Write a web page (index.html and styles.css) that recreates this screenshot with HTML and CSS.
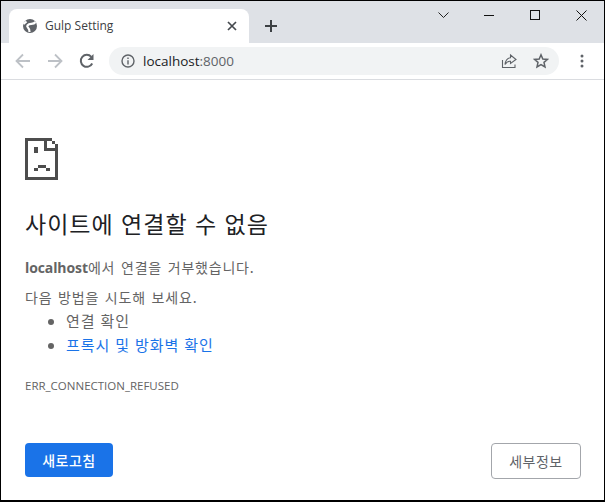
FILE: index.html
```html
<!DOCTYPE html>
<html lang="ko">
<head>
<meta charset="utf-8">
<title>Gulp Setting</title>
<link rel="stylesheet" href="styles.css">
</head>
<body>
<div class="window">
  <header class="tabstrip">
    <div class="tab">
      <svg class="favicon" width="16" height="16" viewBox="0 0 16 16"><circle cx="8" cy="8" r="7" fill="#5f6368"/><path d="M13.500 4C11 7.500 8 4.500 5.500 7.500 4 9.500 8 9.500 7.500 14M1.500 6 4.500 3.500" fill="none" stroke="#fff" stroke-width="2.200"/></svg>
      <span class="tab-title">Gulp Setting</span>
      <svg class="tab-close" width="10" height="10" viewBox="0 0 10 10"><path d="M1 1 9 9M9 1 1 9" stroke="#45494e" stroke-width="1.700"/></svg>
    </div>
    <svg class="newtab" width="14" height="14" viewBox="0 0 14 14"><path d="M7 1V13M1 7H13" stroke="#3c4043" stroke-width="2"/></svg>
    <div class="window-controls">
      <svg class="caption" width="11" height="11" viewBox="0 0 11 11"><path d="M.5 2.500 5.500 7.500 10.500 2.500" fill="none" stroke="#222" stroke-width="1"/></svg>
      <svg class="caption" width="11" height="11" viewBox="0 0 11 11"><path d="M0 5.500H10" stroke="#111" stroke-width="1"/></svg>
      <svg class="caption" width="11" height="11" viewBox="0 0 11 11"><rect x=".5" y=".5" width="9" height="9" fill="none" stroke="#111" stroke-width="1"/></svg>
      <svg class="caption" width="11" height="11" viewBox="0 0 11 11"><path d="M.5.500 10.500 10.500M10.500.500 .5 10.500" stroke="#111" stroke-width="1"/></svg>
    </div>
  </header>
  <nav class="toolbar">
    <svg class="nav" width="16" height="16" viewBox="0 0 16 16"><path d="M15 8H2M8 1.500 1.500 8 8 14.500" fill="none" stroke="#bdc1c6" stroke-width="1.800"/></svg>
    <svg class="nav" width="16" height="16" viewBox="0 0 16 16"><path d="M1 8H14M8 1.500 14.500 8 8 14.500" fill="none" stroke="#bdc1c6" stroke-width="1.800"/></svg>
    <svg class="nav" width="16" height="16" viewBox="0 0 16 16"><path d="M13.200 10.500A6 6 0 1 1 12.300 3.800" fill="none" stroke="#5f6368" stroke-width="2"/><path d="M14.500 1V7H8.500Z" fill="#5f6368"/></svg>
    <div class="omnibox">
      <svg class="info" width="14" height="14" viewBox="0 0 14 14"><circle cx="7" cy="7" r="6" fill="none" stroke="#5f6368" stroke-width="1.400"/><path d="M7 6.200V10.400M7 3.600V5" stroke="#5f6368" stroke-width="1.400"/></svg>
      <span class="url"><span class="host">localhost</span>:8000</span>
      <svg class="omni-icon" width="16" height="16" viewBox="0 0 16 16"><path d="M1.500 7V14.500H14V11.500" fill="none" stroke="#5f6368" stroke-width="1.100"/><path d="M9.500 2 15 6.500 9.500 10.500V8.300C7 8 5.500 9 4 11.500 4.500 7.500 6.500 5 9.500 4.700Z" fill="none" stroke="#5f6368" stroke-width="1.100"/></svg>
      <svg class="omni-icon" width="16" height="16" viewBox="0 0 16 16"><path d="M8 1.800 9.800 6 14.500 6.400 11 9.400 12 14 8 11.600 4 14 5 9.400 1.500 6.400 6.200 6Z" fill="none" stroke="#5f6368" stroke-width="1.500"/></svg>
    </div>
    <svg class="menu" width="4" height="14" viewBox="0 0 4 14"><circle cx="2" cy="2" r="1.500" fill="#5f6368"/><circle cx="2" cy="7" r="1.500" fill="#5f6368"/><circle cx="2" cy="12" r="1.500" fill="#5f6368"/></svg>
  </nav>
  <main class="page">
    <svg class="sad" width="33" height="42" viewBox="0 0 33 42" shape-rendering="crispEdges"><path fill="#4d4d4d" d="M0 0H27V3H3V39H30V6H33V42H0ZM19 3H22V10H30V13H19ZM27 3H30V6H27ZM9 9H13V15H9Z"/><path fill="#4d4d4d" d="M13 27H21V30H13ZM9 30H13V33H9ZM21 30H25V33H21Z"/></svg>
    <h1 class="title">사이트에 연결할 수 없음</h1>
    <p class="refused"><strong>localhost</strong>에서 연결을 거부했습니다.</p>
    <p class="try">다음 방법을 시도해 보세요.</p>
    <ul class="tips">
      <li>연결 확인</li>
      <li><a class="link" href="#">프록시 및 방화벽 확인</a></li>
    </ul>
    <div class="code">ERR_CONNECTION_REFUSED</div>
    <div class="buttons">
      <button class="btn primary">새로고침</button>
      <button class="btn secondary">세부정보</button>
    </div>
  </main>
</div>
</body>
</html>
```
FILE: styles.css
```css
* { box-sizing: border-box; }
html, body { margin: 0; height: 100%; overflow: hidden; }
body { font-family: "Noto Sans CJK KR", "Liberation Sans", sans-serif; background: #fff; }
svg { display: block; flex: none; }
.window { width: 605px; height: 502px; border: 1px solid #000; border-width: 1px 1px 2px 1px; display: flex; flex-direction: column; }
.tabstrip { height: 42px; background: #dee1e6; display: flex; align-items: flex-start; padding: 8px 0 0 8px; flex: none; }
.tab { width: 240px; height: 34px; background: #fff; border-radius: 8px 8px 0 0; display: flex; align-items: center; padding: 0 12px 0 13px; }
.tab-title { font: 12px/16px "Open Sans", "Liberation Sans", sans-serif; color: #3c4043; margin-left: 7px; flex: 1; }
.newtab { margin: 10px 0 0 15px; }
.window-controls { margin-left: auto; display: flex; align-items: center; gap: 35px; padding: 1px 17px 0 0; }
.toolbar { height: 37px; border-bottom: 1px solid #dadce0; display: flex; align-items: center; padding: 0 0 1px 14px; flex: none; }
.nav { margin-right: 16px; }
.nav:nth-child(3) { margin-right: 14px; }
.omnibox { width: 450px; height: 28px; border-radius: 14px; background: #f1f3f4; display: flex; align-items: center; padding: 0 10px 0 12px; }
.info { margin-right: 8px; }
.url { font: 13.500px/20px "Open Sans", "Liberation Sans", sans-serif; color: #5f6368; flex: 1; }
.host { color: #202124; }
.omni-icon { margin-left: 16px; }
.menu { margin-left: 21px; }
.page { flex: 1; padding: 58px 0 0 24px; display: flex; flex-direction: column; position: relative; color: #646464; }
.sad { margin-bottom: 30px; }
.title { margin: 0; font-size: 23px; line-height: 26px; font-weight: 400; color: #202124; letter-spacing: 1px; }
.refused { margin: 21px 0 0; font-size: 14px; line-height: 20px; letter-spacing: .8px; word-spacing: 1px; }
.refused strong { font-family: "Open Sans", "Liberation Sans", sans-serif; font-weight: 700; letter-spacing: -.1px; }
.try { margin: 9px 0 0; font-size: 14px; line-height: 20px; letter-spacing: .8px; word-spacing: 1px; }
.tips { margin: 2px 0 0; padding-left: 41px; font-size: 15px; line-height: 24px; letter-spacing: .9px; }
.link { color: #1a73e8; text-decoration: none; }
.code { margin-top: 21px; font: 11.500px/16px "Open Sans", "Liberation Sans", sans-serif; color: #646464; }
.buttons { margin-top: auto; display: flex; justify-content: space-between; padding: 0 23px 21px 0; align-items: flex-start; }
.btn { font-family: "Noto Sans CJK KR", sans-serif; font-size: 14px; border-radius: 4px; padding: 0; letter-spacing: .5px; }
.primary { width: 88px; height: 34px; background: #1a73e8; color: #fff; border: 0; font-weight: 500; }
.secondary { width: 90px; height: 36px; background: #fff; color: #5f6368; border: 1px solid #a3a6ab; }
```
